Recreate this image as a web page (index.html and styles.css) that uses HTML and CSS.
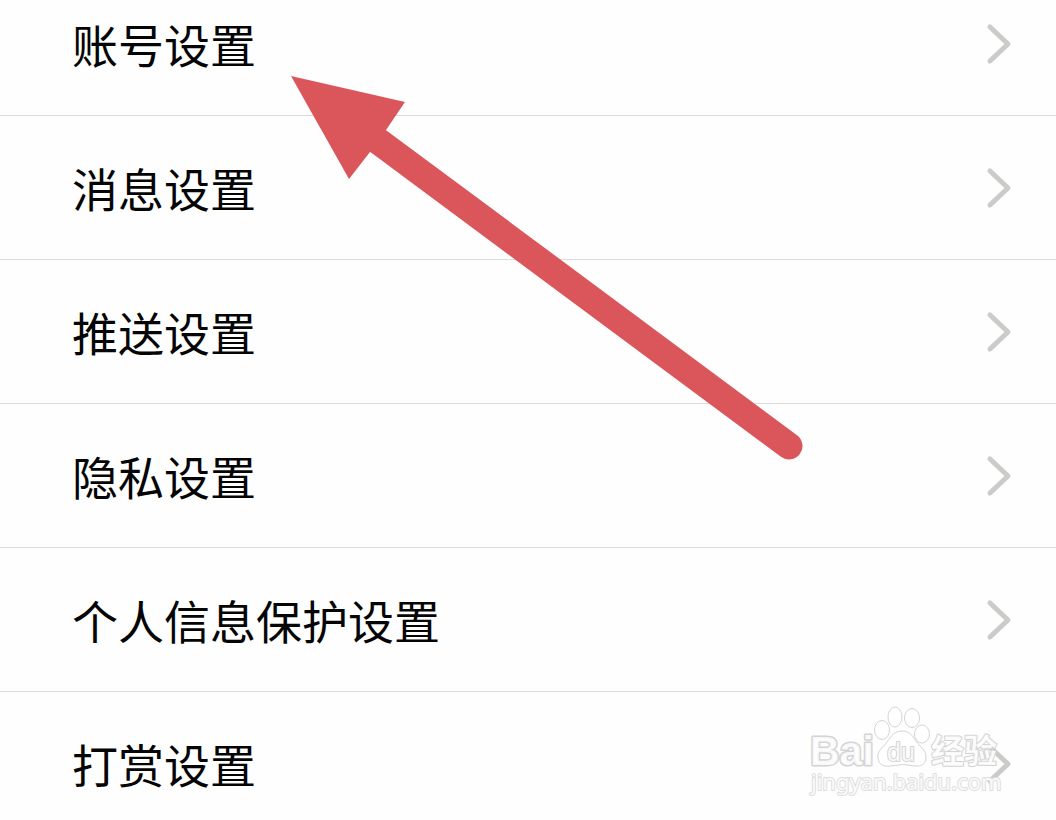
FILE: index.html
```html
<!DOCTYPE html>
<html lang="zh-CN">
<head>
<meta charset="utf-8">
<meta name="viewport" content="width=device-width, initial-scale=1">
<title>设置</title>
<link rel="stylesheet" href="styles.css">
</head>
<body>
<main class="screen">
  <nav class="list" aria-label="设置">
    <a class="row" href="#account"><span class="label">账号设置</span><svg class="chevron" viewBox="0 0 26 42" aria-hidden="true"><path d="M4 4 22 21 4 38"/></svg></a>
    <a class="row" href="#message"><span class="label">消息设置</span><svg class="chevron" viewBox="0 0 26 42" aria-hidden="true"><path d="M4 4 22 21 4 38"/></svg></a>
    <a class="row" href="#push"><span class="label">推送设置</span><svg class="chevron" viewBox="0 0 26 42" aria-hidden="true"><path d="M4 4 22 21 4 38"/></svg></a>
    <a class="row" href="#privacy"><span class="label">隐私设置</span><svg class="chevron" viewBox="0 0 26 42" aria-hidden="true"><path d="M4 4 22 21 4 38"/></svg></a>
    <a class="row" href="#protection"><span class="label">个人信息保护设置</span><svg class="chevron" viewBox="0 0 26 42" aria-hidden="true"><path d="M4 4 22 21 4 38"/></svg></a>
    <a class="row" href="#reward"><span class="label">打赏设置</span><svg class="chevron" viewBox="0 0 26 42" aria-hidden="true"><path d="M4 4 22 21 4 38"/></svg></a>
  </nav>
  <svg class="arrow" viewBox="0 0 520 390" aria-hidden="true">
    <path class="arrow-head" d="M1 6 115 32 96 60 80 82 59 109Z"/>
    <path class="arrow-shaft" d="M84 68 499 376"/>
  </svg>
  <svg class="watermark" viewBox="0 0 266 130" role="img" aria-label="Baidu 经验">
    <text class="mark-bai" x="20" y="75">Bai</text>
    <g class="paw">
      <ellipse cx="92" cy="40" rx="7.5" ry="9.5"/>
      <ellipse cx="105" cy="27" rx="7" ry="10"/>
      <ellipse cx="122" cy="28" rx="7.5" ry="9.5"/>
      <ellipse cx="132" cy="44" rx="7.5" ry="9"/>
      <path d="M112 41C105 41 101 46 97 52C93 58 87 60 88 68C89 75 94 77 100 76Q112 73 125 76C132 77 136 73 136 67C136 60 130 57 126 51C122 45 119 41 112 41Z"/>
    </g>
    <text class="mark-du" x="97" y="71">du</text>
    <text class="mark-cn" x="141" y="73">经验</text>
    <text class="mark-url" x="21" y="100">jingyan.baidu.com</text>
  </svg>
</main>
</body>
</html>
```
FILE: styles.css
```css
body {
  margin: 0;
  background: #fefefe;
  color: #050505;
  font-family: "Noto Sans CJK SC", sans-serif;
}

.screen {
  position: relative;
  height: 100vh;
  overflow: hidden;
}

.list {
  display: flex;
  flex-direction: column;
  margin-top: -28px;
}

.row {
  display: flex;
  align-items: center;
  justify-content: space-between;
  box-sizing: border-box;
  min-height: 144px;
  padding: 0 44px 0 72px;
  border-bottom: 1px solid #dcdcdc;
  color: inherit;
  font-size: 46px;
  line-height: 64px;
  text-decoration: none;
}

.label {
  padding-bottom: 2px;
}

.chevron {
  flex: none;
  width: 26px;
  height: 42px;
  fill: none;
  stroke: #cbcbc9;
  stroke-width: 5;
  stroke-linecap: round;
  stroke-linejoin: round;
}

.arrow {
  position: absolute;
  top: 70px;
  left: 290px;
  width: 520px;
  height: 390px;
  pointer-events: none;
}

.arrow-head {
  fill: #db565b;
}

.arrow-shaft {
  fill: none;
  stroke: #db565b;
  stroke-width: 27;
  stroke-linecap: round;
}

.watermark {
  position: absolute;
  right: 0;
  bottom: 0;
  width: 266px;
  height: 130px;
  fill: #ffffff;
  fill-opacity: 0.85;
  stroke: #d4d4d4;
  stroke-width: 2;
  stroke-linejoin: round;
  paint-order: stroke;
  pointer-events: none;
}

.paw {
  stroke-width: 1;
  paint-order: normal;
}

.mark-bai {
  font: bold 41px "Liberation Sans", sans-serif;
  stroke-width: 3;
}

.mark-du {
  font: 25px "Liberation Sans", sans-serif;
}

.mark-cn {
  font: bold 33px "Noto Sans CJK SC", sans-serif;
}

.mark-url {
  font: 22px "Noto Sans", sans-serif;
  stroke: #dedede;
}
```
